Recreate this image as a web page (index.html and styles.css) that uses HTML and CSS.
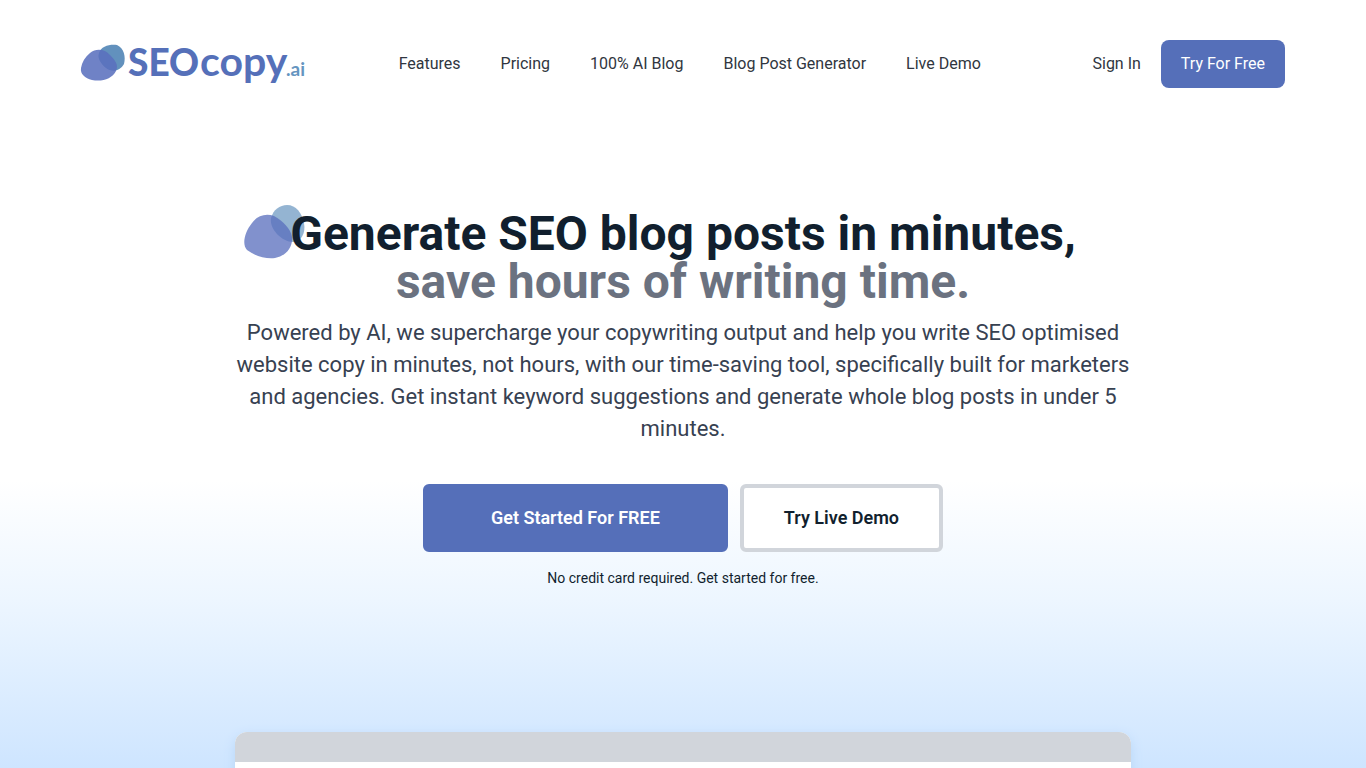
FILE: index.html
```html
<!DOCTYPE html>
<html lang="en">
<head>
<meta charset="utf-8">
<meta name="viewport" content="width=device-width, initial-scale=1">
<title>SEOcopy.ai</title>
<link rel="stylesheet" href="styles.css">
</head>
<body>
<div class="page">
  <header class="header">
    <a class="logo" href="#" aria-label="SEOcopy.ai">
      <svg width="226" height="48" viewBox="0 0 226 48" aria-hidden="true">
        <path d="M18 13C20 6 29 4 36 5C43 8 45 17 43 24C39 31 31 33 25 28C20 24 16 18 18 13Z" fill="#6291bd"/>
        <path d="M9 13C15 8 24 9 29 15C34 20 38 25 35 31C31 39 21 42 11 40C4 38-1 34 0 28C1 22 4 17 9 13Z" fill="#5a6fbd" fill-opacity=".87"/>
        <text class="logo-seo" x="47" y="36">SEO</text>
        <text class="logo-copy" x="119" y="36">copy</text>
        <text class="logo-ai" x="205" y="36">.ai</text>
      </svg>
    </a>
    <nav class="nav" aria-label="Main">
      <a href="#">Features</a>
      <a href="#">Pricing</a>
      <a href="#">100% AI Blog</a>
      <a href="#">Blog Post Generator</a>
      <a href="#">Live Demo</a>
    </nav>
    <div class="account">
      <a href="#">Sign In</a>
      <a class="signup" href="#">Try For Free</a>
    </div>
  </header>
  <main class="hero">
    <h1 class="title">
      <svg class="title-mark" width="62" height="54" viewBox="0 0 62 54" aria-hidden="true">
        <path d="M27 13C29 5 36 0 43 0C52 0 58 8 60 18C62 28 57 37 49 37C38 37 25 24 27 13Z" fill="#6291bd" fill-opacity=".68"/>
        <path d="M8 18C13 11 21 8 30 11C39 16 47 24 48 32C49 42 42 51 31 53C21 54 11 51 3 45C-2 40 0 28 8 18Z" fill="#5a6fbd" fill-opacity=".76"/>
      </svg>
      <span class="title-main">Generate SEO blog posts in minutes,</span>
      <span class="title-sub">save hours of writing time.</span>
    </h1>
    <p class="lead">Powered by AI, we supercharge your copywriting output and help you write SEO optimised website copy in minutes, not hours, with our time-saving tool, specifically built for marketers and agencies. Get instant keyword suggestions and generate whole blog posts in under 5 minutes.</p>
    <div class="actions">
      <a class="button primary" href="#">Get Started For FREE</a>
      <a class="button secondary" href="#">Try Live Demo</a>
    </div>
    <p class="note">No credit card required. Get started for free.</p>
    <div class="preview"><div class="preview-bar"></div></div>
  </main>
</div>
</body>
</html>
```
FILE: styles.css
```css
* { box-sizing: border-box; }
body { margin: 0; font-family: Roboto, "Liberation Sans", sans-serif; color: #111f2e; }
a { color: inherit; text-decoration: none; }
.page { min-height: 100vh; overflow: hidden; background: linear-gradient(#fff 480px, #edf6ff 600px, #cee5ff 768px); }
.header { display: flex; align-items: center; justify-content: space-between; max-width: 1366px; margin: 0 auto; padding: 40px 81px; font-size: 16px; line-height: 24px; color: #303640; }
.logo, .logo svg { display: block; overflow: visible; }
.logo-seo, .logo-copy, .logo-ai { font-family: Lato, sans-serif; }
.logo-seo { font-size: 37px; font-weight: 900; fill: #5570b9; }
.logo-copy { font-size: 41px; font-weight: 700; fill: #5570b9; }
.logo-ai { font-size: 19px; font-weight: 700; fill: #6595c0; }
.nav { display: flex; gap: 40px; margin-right: 20px; }
.account { display: flex; align-items: center; gap: 20px; }
.signup { padding: 12px 20px; border-radius: 8px; background: #556fb9; color: #fff; }
.hero { max-width: 896px; margin: 0 auto; padding-top: 82px; text-align: center; }
.title { position: relative; margin: 0; font-size: 48px; line-height: 48px; font-weight: 700; }
.title-mark { position: absolute; left: 9px; top: -5px; }
.title-main, .title-sub { position: relative; display: block; }
.title-sub { color: #6b7280; }
.lead { margin: 11px 0 39px; font-size: 22px; line-height: 32px; color: #374151; }
.actions { display: flex; justify-content: center; gap: 12px; }
.button { border-radius: 6px; border: 4px solid #556fb9; padding: 16px 40px; font-size: 18px; line-height: 28px; font-weight: 600; }
.primary { padding: 16px 64px; background: #556fb9; color: #fff; }
.secondary { border-color: #d1d5db; background: #fff; }
.note { margin: 16px 0 144px; font-size: 14px; line-height: 20px; }
.preview { min-height: 480px; margin-bottom: -444px; border-radius: 12px 12px 0 0; overflow: hidden; background: #fff; box-shadow: 0 4px 12px #b9d7f7; }
.preview-bar { height: 30px; background: #d1d5db; }
```
